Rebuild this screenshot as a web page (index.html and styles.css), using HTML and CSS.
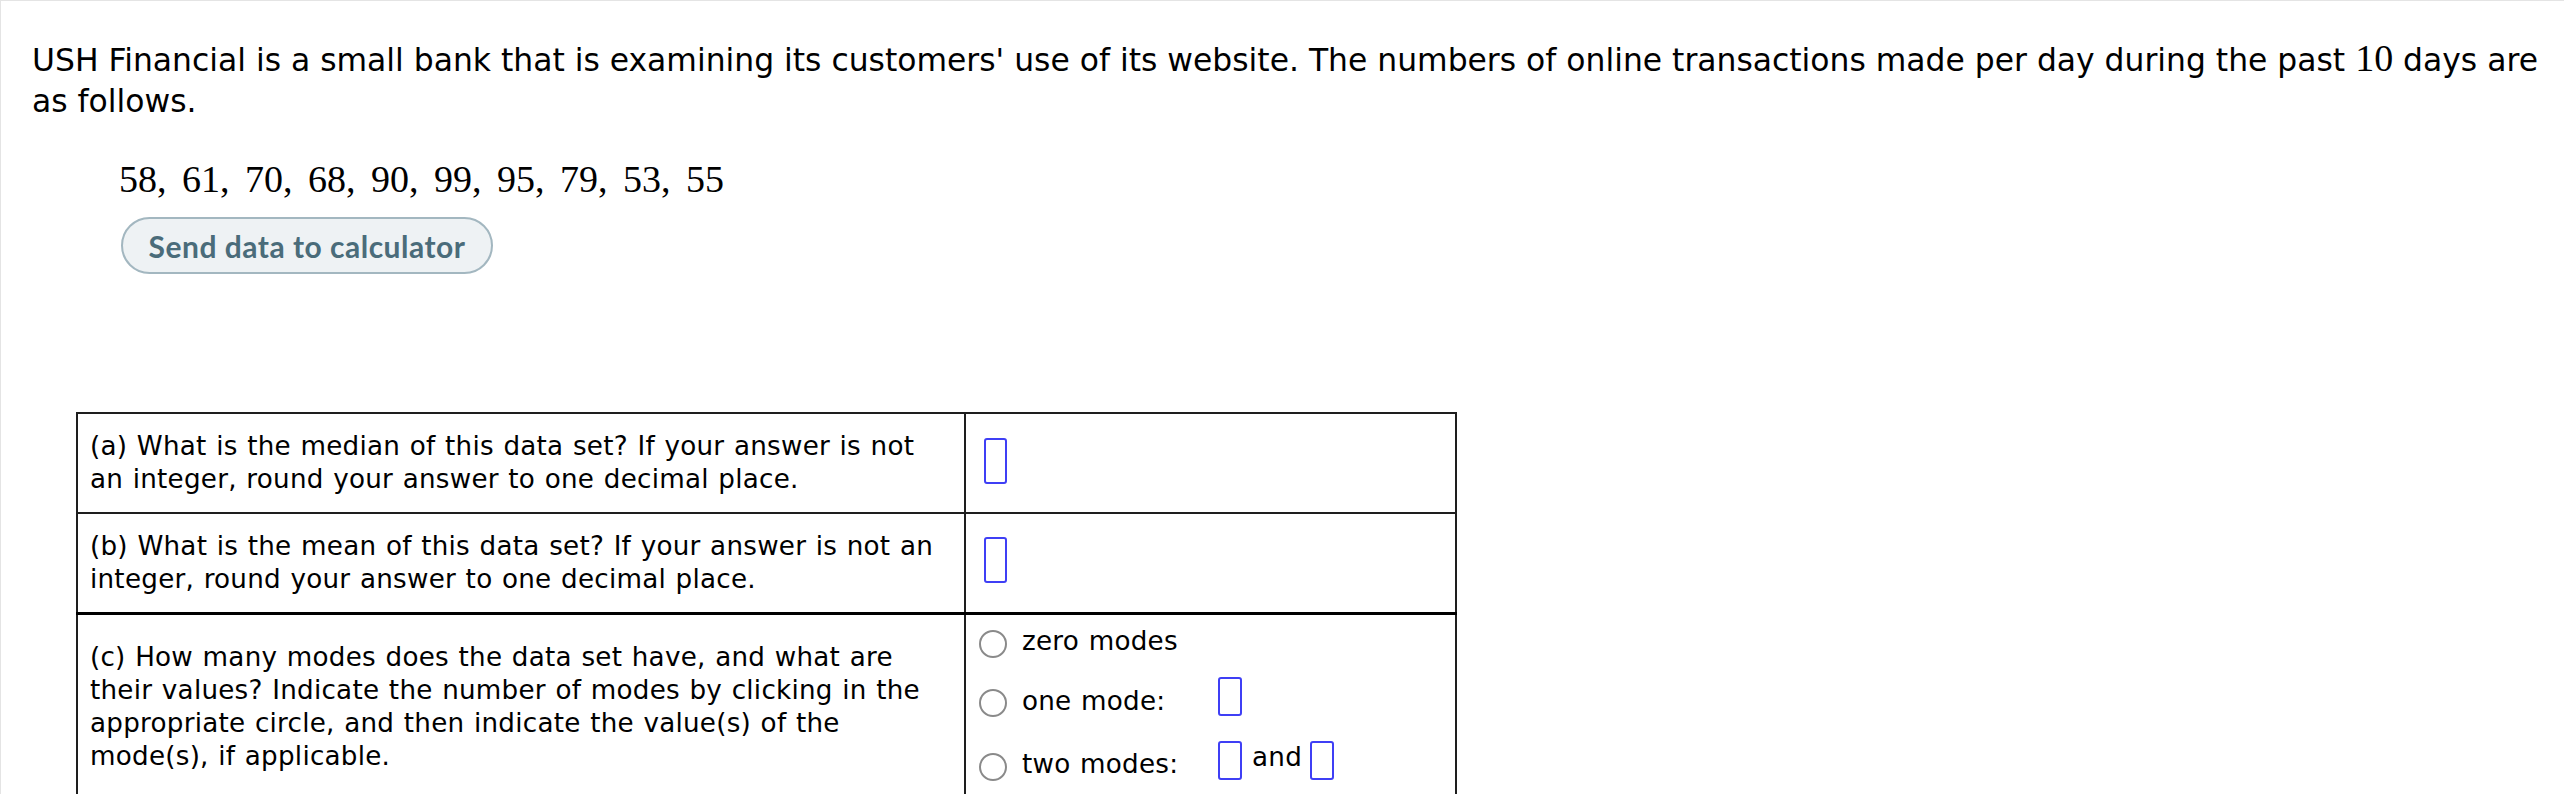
FILE: index.html
```html
<!DOCTYPE html>
<html lang="en">
<head>
<meta charset="utf-8">
<title>USH Financial</title>
<link rel="stylesheet" href="styles.css">
</head>
<body>
<div class="page">
  <p class="intro">USH Financial is a small bank that is examining its customers' use of its website. The numbers of online transactions made per day during the past <span class="math">10</span> days are as follows.</p>
  <div class="data"><span class="math nums">58, 61, 70, 68, 90, 99, 95, 79, 53, 55</span></div>
  <div class="actions"><button class="calc-btn" type="button">Send data to calculator</button></div>
  <table class="qtable">
    <colgroup><col class="c1"><col class="c2"></colgroup>
    <tr class="r1">
      <td class="q">(a) What is the median of this data set? If your answer is not an integer, round your answer to one decimal place.</td>
      <td class="a"><span class="box"></span></td>
    </tr>
    <tr class="r2">
      <td class="q">(b) What is the mean of this data set? If your answer is not an integer, round your answer to one decimal place.</td>
      <td class="a"><span class="box"></span></td>
    </tr>
    <tr class="r3">
      <td class="q">(c) How many modes does the data set have, and what are their values? Indicate the number of modes by clicking in the appropriate circle, and then indicate the value(s) of the mode(s), if applicable.</td>
      <td class="a modes">
        <div class="opt o0"><span class="radio"></span><span class="lbl">zero modes</span></div>
        <div class="opt o1"><span class="radio"></span><span class="lbl">one mode:</span><span class="box sm"></span></div>
        <div class="opt o2"><span class="radio"></span><span class="lbl">two modes:</span><span class="box sm"></span><span class="and">and</span><span class="box sm"></span></div>
      </td>
    </tr>
  </table>
</div>
</body>
</html>
```
FILE: styles.css
```css
html, body {
  margin: 0;
  padding: 0;
  background: #fff;
}
body {
  font-family: "DejaVu Sans", Verdana, sans-serif;
  color: #000;
}
.page {
  border-top: 1px solid #e4e4e4;
  border-left: 1px solid #e4e4e4;
  padding: 39px 20px 0 31px;
  min-height: 794px;
  box-sizing: border-box;
}
.intro {
  margin: 0;
  font-size: 31.4px;
  line-height: 41px;
}
.math {
  font-family: "Liberation Serif", "Times New Roman", serif;
  font-size: 38px;
  line-height: 0;
}
.data {
  margin: 35px 0 0 87px;
  height: 44px;
  line-height: 44px;
}
.nums {
  word-spacing: 6px;
  line-height: 44px;
}
.actions {
  margin: 16px 0 0 89px;
}
.calc-btn {
  font-family: Lato, "Open Sans", sans-serif;
  font-weight: 700;
  font-size: 30px;
  letter-spacing: 0.5px;
  color: #4a6c7a;
  background: #eef2f4;
  border: 2px solid #a3b7c0;
  border-radius: 30px;
  width: 372px;
  height: 57px;
  padding: 0;
}
.qtable {
  margin: 138px 0 0 44px;
  border-collapse: collapse;
  table-layout: fixed;
  width: 1379px;
  font-size: 26.2px;
  line-height: 33px;
  letter-spacing: 0.25px;
  word-spacing: 1px;
}
.c1 { width: 888px; }
.c2 { width: 491px; }
.qtable td {
  border: 2px solid #1e1e1e;
  vertical-align: middle;
  padding: 0 20px 0 12px;
}
.r1 td, .r2 td {
  height: 100px;
  box-sizing: border-box;
}
.r3 td {
  border-top: 3px solid #000;
}
.qtable td.a {
  padding-left: 18px;
}
.box {
  display: inline-block;
  width: 23px;
  height: 46px;
  box-sizing: border-box;
  border: 2px solid #3f3ff5;
  border-radius: 3px;
  vertical-align: middle;
  margin-bottom: 5px;
}
.qtable td.modes {
  padding: 3px 12px 3px 13px;
}
.opt {
  display: flex;
  align-items: center;
}
.o0 { height: 52px; }
.o1 { height: 67px; }
.o2 { height: 60px; }
.radio {
  flex: none;
  width: 24px;
  height: 24px;
  border: 2px solid #8a8a8a;
  border-radius: 50%;
}
.lbl {
  flex: none;
  width: 196px;
  margin-left: 15px;
  margin-bottom: 4px;
}
.box.sm {
  flex: none;
  width: 24px;
  height: 39px;
  margin-bottom: 13px;
}
.and {
  margin: 0 8px 18px 10px;
}
```
